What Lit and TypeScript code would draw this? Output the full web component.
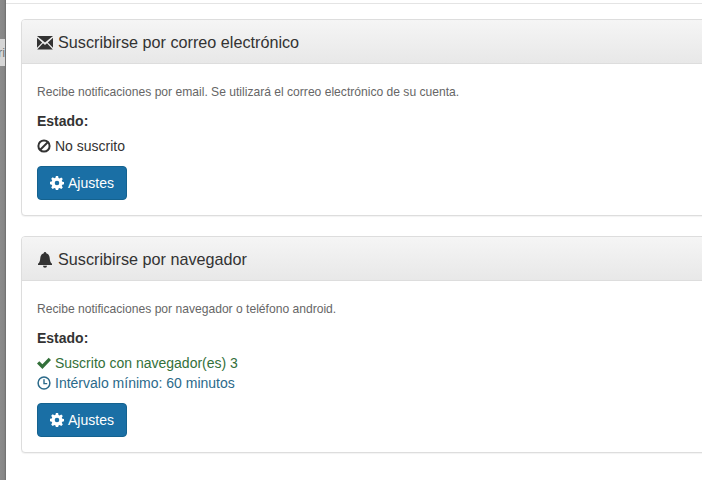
import { LitElement, html, css, svg } from "lit";
import { customElement } from "lit/decorators.js";

const envelope = svg`<path d="M0 1h16L8 7.600z M0 2.800v10l5.200-5.300z M16 2.800v10l-5.200-5.300z M6 8.300 8 10l2-1.700 5.800 6.200H.2z" fill="currentColor"/>`;
const bell = svg`<path d="M8 0a1.200 1.200 0 0 1 1.200 1.300C11.500 1.900 12.500 3.800 12.700 6c.2 2.700.6 4.300 2.300 5.800V13H1v-1.200C2.700 10.300 3.100 8.700 3.300 6 3.500 3.800 4.500 1.900 6.800 1.300A1.200 1.200 0 0 1 8 0zM6 13.800h4a2 2 0 0 1-4 0z" fill="currentColor"/>`;
const ban = svg`<circle cx="7" cy="7" r="5.600" fill="none" stroke="currentColor" stroke-width="2"/><path d="M3 11 11 3" stroke="currentColor" stroke-width="2"/>`;
const gear = svg`<path fill-rule="evenodd" fill="currentColor" d="M5.900 0h2.200l.4 1.900 1.100.5 1.700-1 1.500 1.500-1 1.700.5 1.100 1.900.4v2.200l-1.900.4-.5 1.100 1 1.700-1.500 1.500-1.700-1-1.100.5-.4 1.900H5.900l-.4-1.900-1.100-.5-1.700 1-1.500-1.500 1-1.700-.5-1.100L-.2 8.100V5.900l1.900-.4.5-1.100-1-1.700L2.700 1.200l1.700 1 1.100-.5zM7 4.700a2.300 2.300 0 1 0 0 4.600 2.300 2.300 0 0 0 0-4.600z"/>`;
const check = svg`<path d="M0 7.500 2.300 5.200 5.400 8.300 11.700 1.800 14 4.100 5.400 12.900z" fill="currentColor"/>`;
const clock = svg`<circle cx="7" cy="7" r="5.900" fill="none" stroke="currentColor" stroke-width="1.500"/><path d="M7 3.300V7.600H10.200" fill="none" stroke="currentColor" stroke-width="1.400"/>`;

@customElement("app-root")
export class AppRoot extends LitElement {
  static styles = css`
    :host {
      display: flex;
      width: 702px;
      height: 480px;
      overflow: hidden;
      background: #fff;
      font-family: "Liberation Sans", Arial, sans-serif;
      color: #333;
    }
    .strip {
      flex: 0 0 6px;
      position: relative;
      background: linear-gradient(90deg, #8b8b8b, #868686 70%, #6d6d6d);
      overflow: hidden;
    }
    .tab {
      position: absolute;
      left: 0;
      top: 39px;
      width: 5px;
      height: 27px;
      background: #d6d6d6;
      color: #777;
      font-size: 13px;
      line-height: 27px;
      text-indent: -2px;
      overflow: hidden;
    }
    .main {
      flex: 1 0 0;
      min-width: 0;
    }
    .topline {
      height: 3px;
      border-bottom: 1px solid #e4e4e4;
    }
    .content {
      padding: 15px 0 0 15px;
      width: 720px;
    }
    .panel {
      border: 1px solid #ddd;
      border-radius: 4px;
      box-shadow: 0 1px 1px rgba(0, 0, 0, 0.05);
      margin-bottom: 20px;
      background: #fff;
    }
    .head {
      height: 44px;
      box-sizing: border-box;
      padding: 2px 0 0 15px;
      display: flex;
      align-items: center;
      gap: 5px;
      font-size: 16.2px;
      color: #333;
      background: linear-gradient(#f5f5f5, #e8e8e8);
      border-bottom: 1px solid #ddd;
      border-radius: 3px 3px 0 0;
    }
    .head svg {
      width: 16px;
      height: 16px;
      flex: none;
    }
    .body {
      padding: 15px;
    }
    .desc {
      font-size: 12.1px;
      line-height: 27px;
      height: 24px;
      color: #666;
    }
    .label {
      font-size: 14px;
      font-weight: bold;
      line-height: 20px;
      margin-top: 8px;
    }
    .status {
      font-size: 14px;
      line-height: 20px;
      display: flex;
      align-items: center;
      gap: 4px;
    }
    .status svg {
      width: 14px;
      height: 14px;
      flex: none;
    }
    .gap5 {
      margin-top: 5px;
    }
    .ok {
      color: #33703a;
    }
    .info {
      color: #2b6a8a;
    }
    .btn {
      margin-top: 10px;
      width: 90px;
      height: 34px;
      box-sizing: border-box;
      display: flex;
      align-items: center;
      justify-content: center;
      gap: 4px;
      border: 1px solid #14628f;
      border-radius: 4px;
      background: #1a6fa5;
      color: #fff;
      font: inherit;
      font-size: 14px;
      padding: 0;
    }
    .btn svg {
      width: 14px;
      height: 14px;
      flex: none;
    }
  `;

  private icon(body: unknown, size = 14) {
    return html`<svg viewBox="0 0 ${size} ${size}" aria-hidden="true">${body}</svg>`;
  }

  render() {
    return html`
      <div class="strip"><div class="tab">ri</div></div>
      <div class="main">
        <div class="topline"></div>
        <div class="content">
          <section class="panel">
            <div class="head">${this.icon(envelope, 16)}<span>Suscribirse por correo electrónico</span></div>
            <div class="body">
              <div class="desc">Recibe notificaciones por email. Se utilizará el correo electrónico de su cuenta.</div>
              <div class="label">Estado:</div>
              <div class="status gap5">${this.icon(ban)}<span>No suscrito</span></div>
              <button class="btn">${this.icon(gear)}<span>Ajustes</span></button>
            </div>
          </section>
          <section class="panel">
            <div class="head">${this.icon(bell, 16)}<span>Suscribirse por navegador</span></div>
            <div class="body">
              <div class="desc">Recibe notificaciones por navegador o teléfono android.</div>
              <div class="label">Estado:</div>
              <div class="status gap5 ok">${this.icon(check)}<span>Suscrito con navegador(es) 3</span></div>
              <div class="status info">${this.icon(clock)}<span>Intérvalo mínimo: 60 minutos</span></div>
              <button class="btn">${this.icon(gear)}<span>Ajustes</span></button>
            </div>
          </section>
        </div>
      </div>
    `;
  }
}
